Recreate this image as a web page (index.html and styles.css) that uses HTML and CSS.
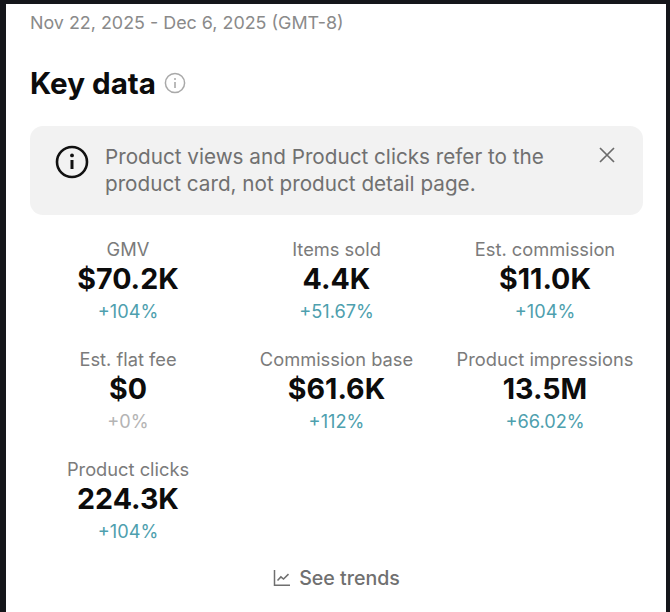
FILE: index.html
```html
<!DOCTYPE html>
<html>
<head>
	<title>Key data</title>
<meta name="viewport" content="width=device-width, initial-scale=1">
<link rel="stylesheet" href="styles.css">
</head>
<body>
<div class="card">
  <div class="range">Nov 22, 2025 - Dec 6, 2025 (GMT-8)</div>
  <div class="head">
    <h1>Key data</h1>
    <svg class="head-info" width="22" height="22" viewBox="0 0 22 22" fill="none" stroke="#a9a9a9" stroke-width="1.5">
      <circle cx="11" cy="11" r="9.6"/>
      <path d="M11 10v6" stroke-width="1.6"/>
      <circle cx="11" cy="6.9" r="1" fill="#a9a9a9" stroke="none"/>
    </svg>
  </div>
  <div class="notice">
    <svg class="notice-icon" width="34" height="34" viewBox="0 0 34 34" fill="none" stroke="#111" stroke-width="2.6">
      <circle cx="17" cy="17" r="15"/>
      <path d="M17 15v9" stroke-width="3"/>
      <circle cx="17" cy="10.4" r="1.9" fill="#111" stroke="none"/>
    </svg>
    <p>Product views and Product clicks refer to the product card, not product detail page.</p>
    <svg class="notice-close" width="18" height="18" viewBox="0 0 18 18" fill="none" stroke="#6b6b6b" stroke-width="1.7">
      <path d="M2 2l14 14M16 2L2 16"/>
    </svg>
  </div>
  <div class="stats">
    <div class="stat"><div class="label">GMV</div><div class="value">$70.2K</div><div class="delta">+104%</div></div>
    <div class="stat"><div class="label">Items sold</div><div class="value">4.4K</div><div class="delta">+51.67%</div></div>
    <div class="stat"><div class="label">Est. commission</div><div class="value">$11.0K</div><div class="delta">+104%</div></div>
    <div class="stat"><div class="label">Est. flat fee</div><div class="value">$0</div><div class="delta zero">+0%</div></div>
    <div class="stat"><div class="label">Commission base</div><div class="value">$61.6K</div><div class="delta">+112%</div></div>
    <div class="stat"><div class="label">Product impressions</div><div class="value">13.5M</div><div class="delta">+66.02%</div></div>
    <div class="stat"><div class="label">Product clicks</div><div class="value">224.3K</div><div class="delta">+104%</div></div>
  </div>
  <div class="trends">
    <svg width="18" height="18" viewBox="0 0 18 18" fill="none" stroke="#6f6f6f" stroke-width="1.5">
      <path d="M1.5 1v15.2H17"/>
      <path d="M4.5 11.5l3.4-3.6 2.6 2.2 5-5"/>
    </svg>
    <span>See trends</span>
  </div>
</div>
</body>
</html>
```

FILE: styles.css
```css
html, body {
  margin: 0;
  height: 100%;
}
body {
  background-color: #15161a;
  font-family: Inter, "Noto Sans", Arial, sans-serif;
  overflow: hidden;
}
.card {
  box-sizing: border-box;
  height: 608px;
  margin: 4px 4px 0 6px;
  padding: 8px 23px 0 24px;
  background-color: #fff;
}
.range {
  font-size: 17.9px;
  line-height: 22px;
  color: #8a8a8a;
}
.head {
  display: flex;
  align-items: center;
  gap: 8px;
  margin-top: 30px;
}
h1 {
  margin: 0;
  font-size: 29.6px;
  line-height: 38px;
  font-weight: 700;
  color: #0c0c0c;
}
.notice {
  display: flex;
  align-items: flex-start;
  height: 89px;
  box-sizing: border-box;
  margin-top: 24px;
  padding: 17px 27px 0 25px;
  border-radius: 13px;
  background-color: #f2f2f2;
}
.notice-icon {
  flex: none;
  margin-top: 2px;
}
.notice p {
  flex: 1;
  margin: 0 0 0 16px;
  font-size: 20.7px;
  line-height: 27px;
  color: #707070;
}
.notice-close {
  flex: none;
  margin-top: 3px;
}
.stats {
  display: grid;
  grid-template-columns: repeat(3, 208.5px);
  justify-content: center;
  row-gap: 25px;
  margin-top: 22px;
}
.stat {
  text-align: center;
}
.label {
  font-size: 18.3px;
  line-height: 24px;
  color: #7b7b7b;
}
.value {
  font-size: 28.6px;
  line-height: 36px;
  font-weight: 700;
  color: #0c0c0c;
}
.delta {
  margin-top: 3px;
  font-size: 18.2px;
  line-height: 22px;
  color: #4e9fae;
}
.delta.zero {
  color: #b4b4b4;
}
.trends {
  display: flex;
  justify-content: center;
  align-items: center;
  gap: 8px;
  margin-top: 23px;
  font-size: 19.6px;
  line-height: 26px;
  font-weight: 500;
  color: #707070;
}
```
